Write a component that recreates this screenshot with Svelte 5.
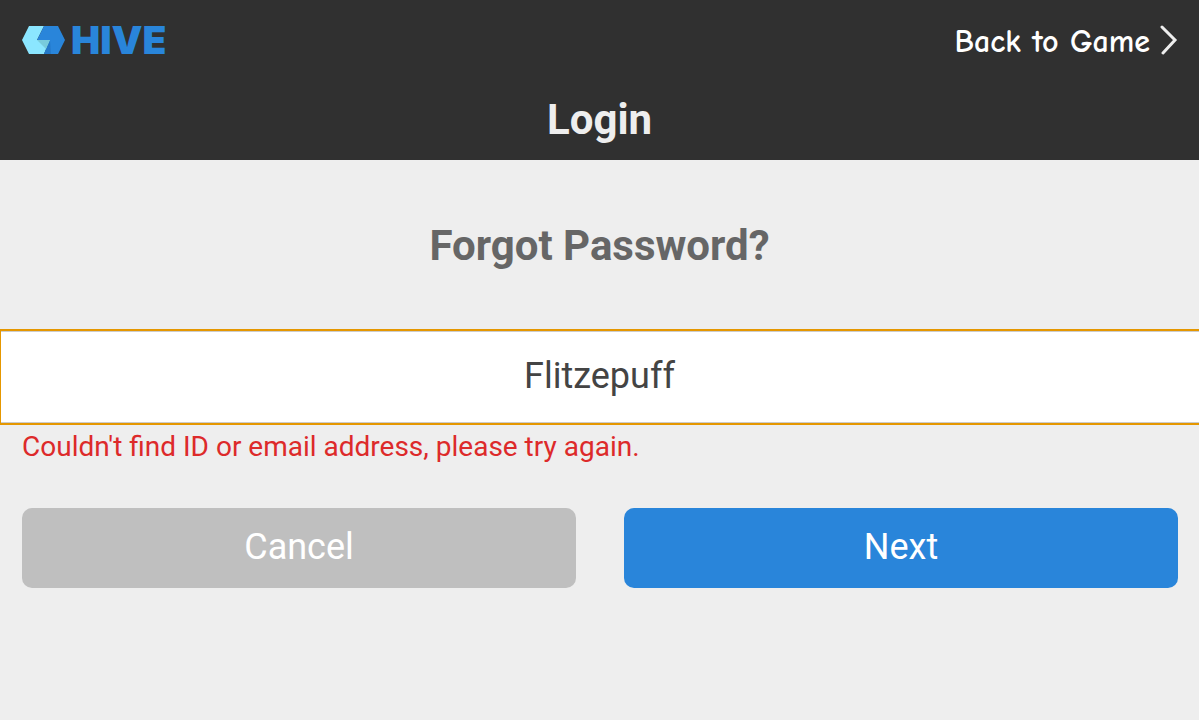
<script lang="ts">
  let account = 'Flitzepuff';
  let error = "Couldn't find ID or email address, please try again.";

  function cancel() {
    account = '';
    error = '';
  }

  function submit() {
    if (!account.trim()) {
      error = 'Please enter your ID or email address.';
    }
  }
</script>

<div class="page">
  <header class="header">
    <div class="topbar">
      <a class="logo" href="/" aria-label="HIVE">
        <svg class="logo-mark" viewBox="0 0 43 28" aria-hidden="true">
          <path fill="#8be6ff" d="M7 0h15l-7 14h13l-6 14H7L0 14z" />
          <path fill="#2985da" d="M22 0h14l7 14-7 14H22l6-14H15z" />
          <path fill="#2478c8" d="M28 14l1 14h-7z" />
          <path fill="#78cbdc" d="M15 14h13l-4 9z" />
        </svg>
        <span class="logo-text">HIVE</span>
      </a>
      <a class="back" href="/game">
        <span class="back-label">Back to Game</span>
        <svg class="back-arrow" viewBox="0 0 18 32" aria-hidden="true">
          <path d="M2 3l13 13L3 29" />
        </svg>
      </a>
    </div>
    <h1>Login</h1>
  </header>

  <main>
    <h2 id="form-title">Forgot Password?</h2>
    <form on:submit|preventDefault={submit}>
      <input
        class="account"
        type="text"
        aria-labelledby="form-title"
        aria-describedby="form-error"
        autocomplete="username"
        spellcheck="false"
        bind:value={account}
      />
      <p id="form-error" class="error" role="alert">{error}</p>
      <div class="actions">
        <button class="button cancel" type="button" on:click={cancel}>Cancel</button>
        <button class="button next" type="submit">Next</button>
      </div>
    </form>
  </main>
</div>

<style>
  :global(body) {
    background: #eee;
  }

  .page {
    overflow: hidden;
    font-family: Roboto, sans-serif;
  }

  .header {
    background: #303030;
    color: #eee;
  }

  .topbar {
    display: flex;
    align-items: center;
    justify-content: space-between;
    height: 80px;
    padding: 0 21px 0 22px;
  }

  .logo {
    display: flex;
    align-items: center;
    gap: 6px;
    color: #2985da;
    text-decoration: none;
  }

  .logo-mark {
    width: 43px;
    height: 28px;
  }

  .logo-text {
    font-family: Inter, sans-serif;
    font-size: 39px;
    font-weight: 900;
    line-height: 40px;
  }

  .back {
    display: flex;
    align-items: center;
    gap: 10px;
    color: #fff;
    font-family: "Comic Neue", "Comic Sans MS", Roboto, sans-serif;
    font-size: 32px;
    font-weight: 700;
    line-height: 40px;
    text-decoration: none;
  }

  .back-label {
    padding-top: 4px;
  }

  .back-arrow {
    width: 18px;
    height: 32px;
    fill: none;
    stroke: #eee;
    stroke-width: 3;
    stroke-linecap: round;
  }

  h1,
  h2 {
    margin: 0;
    font-size: 42px;
    font-weight: 700;
    text-align: center;
  }

  h1 {
    line-height: 80px;
  }

  h2 {
    padding: 45px 0 44px;
    color: #666;
    line-height: 82px;
  }

  .account {
    display: block;
    box-sizing: border-box;
    width: 100%;
    height: 92px;
    margin: 0 0 0 1px;
    padding: 0 24px 2px 22px;
    border: solid #ccc;
    border-width: 1px 0;
    outline: 2px solid #e59700;
    background: #fff;
    color: #444;
    font-family: inherit;
    font-size: 36px;
    text-align: center;
  }

  .error {
    min-height: 48px;
    margin: 0;
    padding: 0 22px;
    color: #dd2a2a;
    font-size: 28px;
    line-height: 48px;
  }

  .actions {
    display: grid;
    grid-template-columns: 1fr 1fr;
    gap: 48px;
    padding: 37px 21px 48px 22px;
  }

  .button {
    height: 80px;
    padding: 0 0 3px;
    border: 0;
    border-radius: 10px;
    color: #fff;
    font-family: inherit;
    font-size: 36px;
    cursor: pointer;
  }

  .cancel {
    background: #bfbfbf;
  }

  .next {
    background: #2985da;
  }
</style>
